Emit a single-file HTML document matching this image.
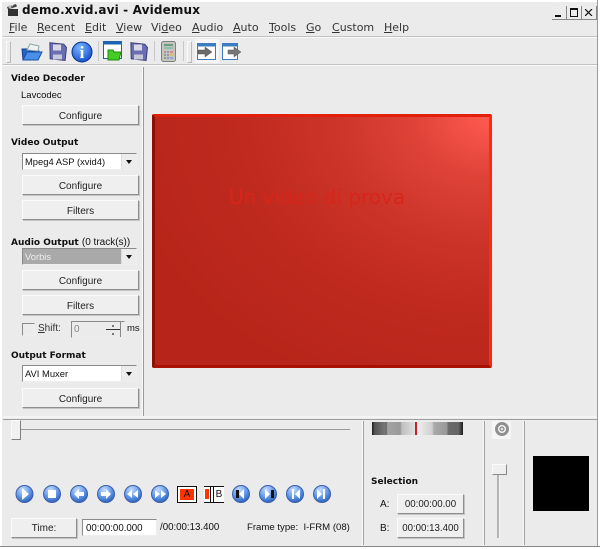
<!DOCTYPE html>
<html><head><meta charset="utf-8">
<style>
html,body{margin:0;padding:0;background:#ebebeb}
body{width:600px;height:549px;overflow:hidden;background:#ebebeb;position:relative;font-family:"DejaVu Sans",sans-serif;font-size:10px;color:#111;filter:blur(.3px)}
.a{position:absolute;white-space:nowrap}
.m{position:absolute;top:21px;font-size:11px;line-height:14px;color:#333}
.m u{text-decoration:underline}
.b{position:absolute;box-sizing:border-box;background:#efefef;border:1px solid;border-color:#fbfbfb #8e8e8e #8e8e8e #fbfbfb;box-shadow:1px 1px 0 #c4c4c4;text-align:center;font-family:"Liberation Sans",sans-serif;font-size:10px;color:#222}
.h{position:absolute;font-weight:bold;font-size:9px;left:11px;line-height:12px;color:#111;white-space:nowrap}
.c{position:absolute;box-sizing:border-box;left:22px;width:115px;height:17px;background:#fff;border:1px solid #8a8a8a;border-right-color:#eee;border-bottom-color:#eee;font-family:"Liberation Sans",sans-serif;font-size:9.4px;line-height:15px;padding-left:2px;color:#111}
.ar{position:absolute;right:0;top:0;width:15px;height:15px;background:#ececec;border-left:1px solid #ddd;box-sizing:border-box}
.ar:after{content:"";position:absolute;left:4px;top:6px;border:3px solid transparent;border-top:4px solid #111}
.l{position:absolute;background:#9a9a9a}
.w{position:absolute;background:#fafafa}
svg{position:absolute}
.t{font-family:"Liberation Sans",sans-serif}
</style></head><body>

<!-- title bar -->
<svg style="left:6px;top:3px" width="14" height="14" viewBox="0 0 14 14"><path d="M2 6h10v7H2z" fill="#333"/><path d="M1 4l9-3 1 2.500-9 3z" fill="#444"/><path d="M3 4l1-1M6 3l1-1" stroke="#ddd"/><circle cx="4" cy="4" r="1.500" fill="#bbb"/></svg>
<div class="a" style="left:22px;top:2px;font-weight:bold;font-size:12px;line-height:16px;letter-spacing:.15px;color:#111">demo.xvid.avi - Avidemux</div>
<div class="a" style="left:552px;top:6px;width:14px;height:13px;background:#ececec;border-bottom:1px solid #888;border-right:1px solid #888"><div style="position:absolute;left:3px;top:9px;width:6px;height:2px;background:#111"></div></div>
<div class="a" style="left:567px;top:6px;width:14px;height:13px;background:#ececec;border-bottom:1px solid #888;border-right:1px solid #888"><div style="position:absolute;left:3px;top:2px;width:6px;height:6px;border:1px solid #111;border-top-width:2px"></div></div>
<div class="a" style="left:582px;top:6px;width:14px;height:13px;background:#ececec;border-bottom:1px solid #888;border-right:1px solid #888"><svg style="left:3px;top:3px" width="8" height="7"><path d="M0 0l7 7M7 0l-7 7" stroke="#111" stroke-width="1.200"/></svg></div>

<!-- menu -->
<div class="m" style="left:9px"><u>F</u>ile</div>
<div class="m" style="left:37px"><u>R</u>ecent</div>
<div class="m" style="left:85px"><u>E</u>dit</div>
<div class="m" style="left:116px"><u>V</u>iew</div>
<div class="m" style="left:151px">Vi<u>d</u>eo</div>
<div class="m" style="left:192px"><u>A</u>udio</div>
<div class="m" style="left:233px"><u>A</u>uto</div>
<div class="m" style="left:269px"><u>T</u>ools</div>
<div class="m" style="left:306px"><u>G</u>o</div>
<div class="m" style="left:332px"><u>C</u>ustom</div>
<div class="m" style="left:384px"><u>H</u>elp</div>
<div class="l" style="left:3px;top:36px;width:594px;height:1px;background:#c2c2c2"></div>
<div class="w" style="left:3px;top:37px;width:594px;height:1px"></div>

<!-- toolbar -->
<div class="a" style="left:6px;top:41px;width:3px;height:20px;border:1px solid;border-color:#fafafa #bbb #bbb #fafafa"></div>
<svg style="left:21px;top:42px" width="22" height="20" viewBox="0 0 22 20"><path d="M1 7h6l1 2h10l-2 9H2z" fill="#2266cc" stroke="#123f8c"/><path d="M6 8l3-6 9 2-1 5z" fill="#f2f2f2" stroke="#8aa"/><path d="M2 18l4-8h15l-4 8z" fill="#4a90e8" stroke="#1a4fa8"/></svg>
<svg style="left:47px;top:41px" width="20" height="21" viewBox="0 0 20 20"><path d="M2 2h14l3 3v13H4z" fill="#6a6eb0" stroke="#3b3d76" transform="rotate(6 10 10)"/><path d="M6 3h8v6H6z" fill="#d8d8e8"/><path d="M6 13h9v5H6z" fill="#c8c8dc"/></svg>
<svg style="left:71px;top:41px" width="22" height="22" viewBox="0 0 22 22"><defs><radialGradient id="i" cx=".4" cy=".3" r=".8"><stop offset="0" stop-color="#7ab8ff"/><stop offset="1" stop-color="#0a45c8"/></radialGradient></defs><circle cx="11" cy="11" r="10" fill="url(#i)" stroke="#0a2f8c"/><text x="11" y="17" text-anchor="middle" font-family="Liberation Serif,serif" font-size="17" font-weight="bold" fill="#fff">i</text></svg>
<div class="l" style="left:98px;top:41px;width:1px;height:20px;background:#c8c8c8"></div>
<svg style="left:103px;top:41px" width="20" height="21" viewBox="0 0 20 21"><rect x=".5" y=".5" width="18" height="17" fill="#fff" stroke="#1e63b0"/><rect x=".5" y=".5" width="18" height="3" fill="#1e63b0"/><path d="M5 9h5l1 2h7l-2 8H5z" fill="#44cc22" stroke="#1f8a10"/></svg>
<svg style="left:128px;top:41px" width="20" height="21" viewBox="0 0 20 20"><path d="M2 2h14l3 3v13H4z" fill="#6a6eb0" stroke="#3b3d76" transform="rotate(6 10 10)"/><path d="M6 3h8v6H6z" fill="#d8d8e8"/><path d="M6 13h9v5H6z" fill="#c8c8dc"/></svg>
<div class="l" style="left:154px;top:41px;width:1px;height:20px;background:#c8c8c8"></div>
<svg style="left:161px;top:41px" width="15" height="21" viewBox="0 0 15 21"><rect x=".5" y=".5" width="14" height="20" rx="2" fill="#c4c4c0" stroke="#808080"/><rect x="3" y="3" width="9" height="2" fill="#6c9c80"/><rect x="3" y="6" width="9" height="2" fill="#8fbea4"/><path d="M3 10h2v2H3zM3 13h2v2H3zM3 16h2v2H3zM6 10h2v2H6zM6 13h2v2H6zM6 16h2v2H6z" fill="#999"/><path d="M9 10h3v2H9z" fill="#d88"/><path d="M9 13h3v2H9z" fill="#db7"/><path d="M9 16h3v2H9z" fill="#8ad"/></svg>
<div class="l" style="left:183px;top:41px;width:1px;height:20px;background:#c8c8c8"></div>
<div class="a" style="left:187px;top:41px;width:3px;height:20px;border:1px solid;border-color:#fafafa #bbb #bbb #fafafa"></div>
<div class="a" style="left:195px;top:39px;width:24px;height:24px;background:#f6f6f6"></div>
<svg style="left:197px;top:43px" width="20" height="18" viewBox="0 0 20 18"><rect x=".5" y=".5" width="18" height="16" fill="#fff" stroke="#3c7cc0"/><rect x=".5" y=".5" width="18" height="3" fill="#3c7cc0"/><path d="M1 7h7V4l7 5-7 5v-3H1z" fill="#6a6a6a" stroke="#555" stroke-width=".5"/></svg>
<svg style="left:222px;top:43px" width="20" height="18" viewBox="0 0 20 18"><rect x=".5" y=".5" width="15" height="16" fill="#fff" stroke="#3c7cc0"/><rect x=".5" y=".5" width="15" height="3" fill="#3c7cc0"/><path d="M6 7h6V4l7 5-7 5v-3H6z" fill="#777" stroke="#555" stroke-width=".5"/></svg>
<div class="l" style="left:3px;top:64px;width:594px;height:1px;background:#c2c2c2"></div>
<div class="w" style="left:3px;top:65px;width:594px;height:1px"></div>

<!-- left panel -->
<div class="w" style="left:142px;top:67px;width:1px;height:349px"></div>
<div class="l" style="left:143px;top:67px;width:1px;height:349px;background:#999"></div>
<div class="h" style="top:73px">Video Decoder</div>
<div class="a t" style="left:21px;top:90px;font-size:9.500px;line-height:12px">Lavcodec</div>
<div class="b" style="left:22px;top:105px;width:117px;height:20px;line-height:21px">Configure</div>
<div class="h" style="top:137px">Video Output</div>
<div class="c" style="top:153px">Mpeg4 ASP (xvid4)<div class="ar"></div></div>
<div class="b" style="left:22px;top:175px;width:117px;height:20px;line-height:21px">Configure</div>
<div class="b" style="left:22px;top:200px;width:117px;height:20px;line-height:21px">Filters</div>
<div class="h" style="top:237px">Audio Output <span class="t" style="font-weight:normal;font-size:10px">(0 track(s))</span></div>
<div class="c" style="top:248px;background:#a9a9a9;color:#eee">Vorbis<div class="ar"></div></div>
<div class="b" style="left:22px;top:270px;width:117px;height:20px;line-height:21px">Configure</div>
<div class="b" style="left:22px;top:295px;width:117px;height:20px;line-height:21px">Filters</div>
<div class="a" style="left:22px;top:323px;width:11px;height:11px;background:#ececec;border:1px solid;border-color:#8a8a8a #eee #eee #8a8a8a"></div>
<div class="a t" style="left:38px;top:323px;font-size:10px;line-height:12px;color:#333"><u>S</u>hift:</div>
<div class="a t" style="left:71px;top:321px;width:50px;height:15px;border:1px solid;border-color:#8a8a8a #eee #eee #8a8a8a;font-size:10px;line-height:16px;padding-left:2px;color:#888">0</div>
<div class="a" style="left:106px;top:322px;width:14px;height:15px;border-right:1px solid #888"><div style="position:absolute;top:7px;left:0;width:14px;height:1px;background:#333"></div><div style="position:absolute;top:3px;left:6px;width:2px;height:2px;background:#777"></div><div style="position:absolute;top:11px;left:6px;width:2px;height:2px;background:#777"></div></div>
<div class="a t" style="left:127px;top:323px;font-size:9.500px;line-height:12px">ms</div>
<div class="h" style="top:350px">Output Format</div>
<div class="c" style="top:365px">AVI Muxer<div class="ar"></div></div>
<div class="b" style="left:22px;top:388px;width:117px;height:20px;line-height:21px">Configure</div>

<!-- video -->
<div class="a" style="left:152px;top:114px;width:340px;height:254px;box-sizing:border-box;border-radius:2px;border:3px solid;border-color:#e2200a #ff2a0e #a81204 #8c1004;background:radial-gradient(ellipse 112% 118% at 100% 0,#ff5a50 0,#df4338 20%,#cc3429 42%,#c02a1f 65%,#b7251a 100%)"></div>
<div class="a" style="left:229px;top:185px;font-size:20px;line-height:24px;color:#d8251a">Un video di prova</div>

<!-- bottom -->
<div class="w" style="left:3px;top:416px;width:594px;height:2px;background:#f4f4f4"></div>
<div class="l" style="left:3px;top:419px;width:594px;height:1px;background:#9e9e9e"></div>
<div class="l" style="left:20px;top:429px;width:330px;height:1px;background:#9a9a9a"></div>
<div class="a" style="left:11px;top:420px;width:8px;height:18px;background:#f1f1f1;border:1px solid;border-color:#fafafa #808080 #808080 #fafafa"></div>

<svg style="left:14px;top:483px" width="320" height="22" viewBox="0 0 320 22">
<defs><radialGradient id="g" cx=".4" cy=".25" r=".85"><stop offset="0" stop-color="#c4dcff"/><stop offset=".55" stop-color="#5c94e6"/><stop offset="1" stop-color="#2350a8"/></radialGradient></defs>
<g stroke="#3a5fac" fill="url(#g)"><circle cx="10.500" cy="11" r="8.500"/><circle cx="38" cy="11" r="8.500"/><circle cx="65" cy="11" r="8.500"/><circle cx="92" cy="11" r="8.500"/><circle cx="119" cy="11" r="8.500"/><circle cx="146" cy="11" r="8.500"/><circle cx="227" cy="11" r="8.500"/><circle cx="254" cy="11" r="8.500"/><circle cx="281" cy="11" r="8.500"/><circle cx="308" cy="11" r="8.500"/></g>
<g fill="#fff"><path d="M8 5l7 6-7 6z"/><rect x="34" y="7" width="8" height="8"/><path d="M60 11l5-5v3h5v4h-5v3z"/><path d="M97 11l-5-5v3h-5v4h5v3z"/><path d="M113 11l5-4v8zM119 11l5-4v8z"/><path d="M152 11l-5-4v8zM146 11l-5-4v8z"/><path d="M230 6v10l-5-5z"/><path d="M251 6v10l5-5z"/><path d="M278 6h2v10h-2zM286 6v10l-5-5z"/><path d="M311 6h-2v10h2zM303 6v10l5-5z"/></g>
<g fill="#111"><rect x="222" y="7" width="3" height="8"/><rect x="257" y="7" width="3" height="8"/></g>
</svg>
<div class="a" style="left:177px;top:486px;width:18px;height:15px;border:1px solid #111;background:#fff"><div style="position:absolute;left:2px;top:2px;width:14px;height:11px;background:#ff3300;font:10px/11px 'Liberation Sans',sans-serif;text-align:center;color:#111">A</div></div>
<div class="a" style="left:204px;top:486px;width:20px;height:15px;border-top:1px solid #111;border-bottom:1px solid #111;background:#fff"></div>
<div class="a" style="left:205px;top:489px;width:4px;height:10px;background:#ff3300"></div>
<div class="a" style="left:210px;top:486px;width:1px;height:16px;background:#111"></div>
<div class="a" style="left:213px;top:486px;width:11px;height:16px;border-left:1px solid #111;box-sizing:border-box;font:10px/17px 'Liberation Sans',sans-serif;text-align:center;color:#111">B</div>

<div class="b" style="left:11px;top:518px;width:66px;height:20px;line-height:20px">Time:</div>
<div class="a t" style="left:82px;top:519px;width:70px;height:15px;background:#fff;border:1px solid;border-color:#8a8a8a #eee #eee #8a8a8a;font-size:9.700px;line-height:17px;padding-left:3px">00:00:00.000</div>
<div class="a t" style="left:160px;top:522px;font-size:9.700px;line-height:12px">/00:00:13.400</div>
<div class="a t" style="left:247px;top:522px;font-size:9.600px;line-height:12px">Frame type:&nbsp; I-FRM (08)</div>

<!-- dividers -->
<div class="w" style="left:362px;top:421px;width:1px;height:124px"></div>
<div class="l" style="left:363px;top:421px;width:1px;height:124px;background:#a0a0a0"></div>
<div class="w" style="left:483px;top:421px;width:1px;height:124px"></div>
<div class="l" style="left:484px;top:421px;width:1px;height:124px;background:#a0a0a0"></div>
<div class="w" style="left:523px;top:421px;width:1px;height:124px"></div>
<div class="l" style="left:524px;top:421px;width:1px;height:124px;background:#a0a0a0"></div>

<div class="a" style="left:372px;top:422px;width:91px;height:13px;background:linear-gradient(90deg,#1c1c1c 0,#555 3%,#777 14%,#6a6a6a 16%,#a4a4a4 17%,#999 31%,#c0c0c0 33%,#e4e4e4 49%,#f0f0f0 50%,#cfcfcf 66%,#aaa 68%,#999 82%,#6a6a6a 84%,#666 95%,#1c1c1c 100%)"></div>
<div class="a" style="left:415px;top:422px;width:2px;height:13px;background:#c8202a"></div>

<div class="a" style="left:492px;top:421px;width:19px;height:18px;background:#f6f6f6"></div>
<svg style="left:494px;top:421px" width="16" height="16" viewBox="0 0 16 16"><circle cx="8" cy="8" r="5.500" fill="none" stroke="#909090" stroke-width="3"/><circle cx="8" cy="8" r="2" fill="#e0e0e0" stroke="#777"/></svg>
<div class="a" style="left:497px;top:473px;width:2px;height:65px;background:#b4b4b4;border-right:1px solid #f4f4f4"></div>
<div class="a" style="left:492px;top:464px;width:13px;height:9px;background:#efefef;border:1px solid;border-color:#fafafa #888 #888 #fafafa"></div>
<div class="a" style="left:533px;top:456px;width:56px;height:55px;background:#000"></div>

<div class="h" style="left:371px;top:476px">Selection</div>
<div class="a t" style="left:380px;top:499px;font-size:10px;line-height:12px">A:</div>
<div class="b" style="left:397px;top:494px;width:67px;height:20px;line-height:20px;font-size:9.700px">00:00:00.00</div>
<div class="a t" style="left:380px;top:523px;font-size:10px;line-height:12px">B:</div>
<div class="b" style="left:397px;top:518px;width:67px;height:20px;line-height:20px;font-size:9.700px">00:00:13.400</div>

<!-- window edges -->
<div class="l" style="left:0;top:0;width:600px;height:2px;background:#fff"></div>
<div class="l" style="left:0;top:0;width:2px;height:549px;background:#fff"></div>
<div class="l" style="left:597px;top:0;width:3px;height:549px;background:#fff;border-left:1px solid #999;box-sizing:border-box"></div>
<div class="l" style="left:0;top:546px;width:600px;height:3px;background:#fff;border-top:1px solid #888;box-sizing:border-box"></div>
</body></html>
